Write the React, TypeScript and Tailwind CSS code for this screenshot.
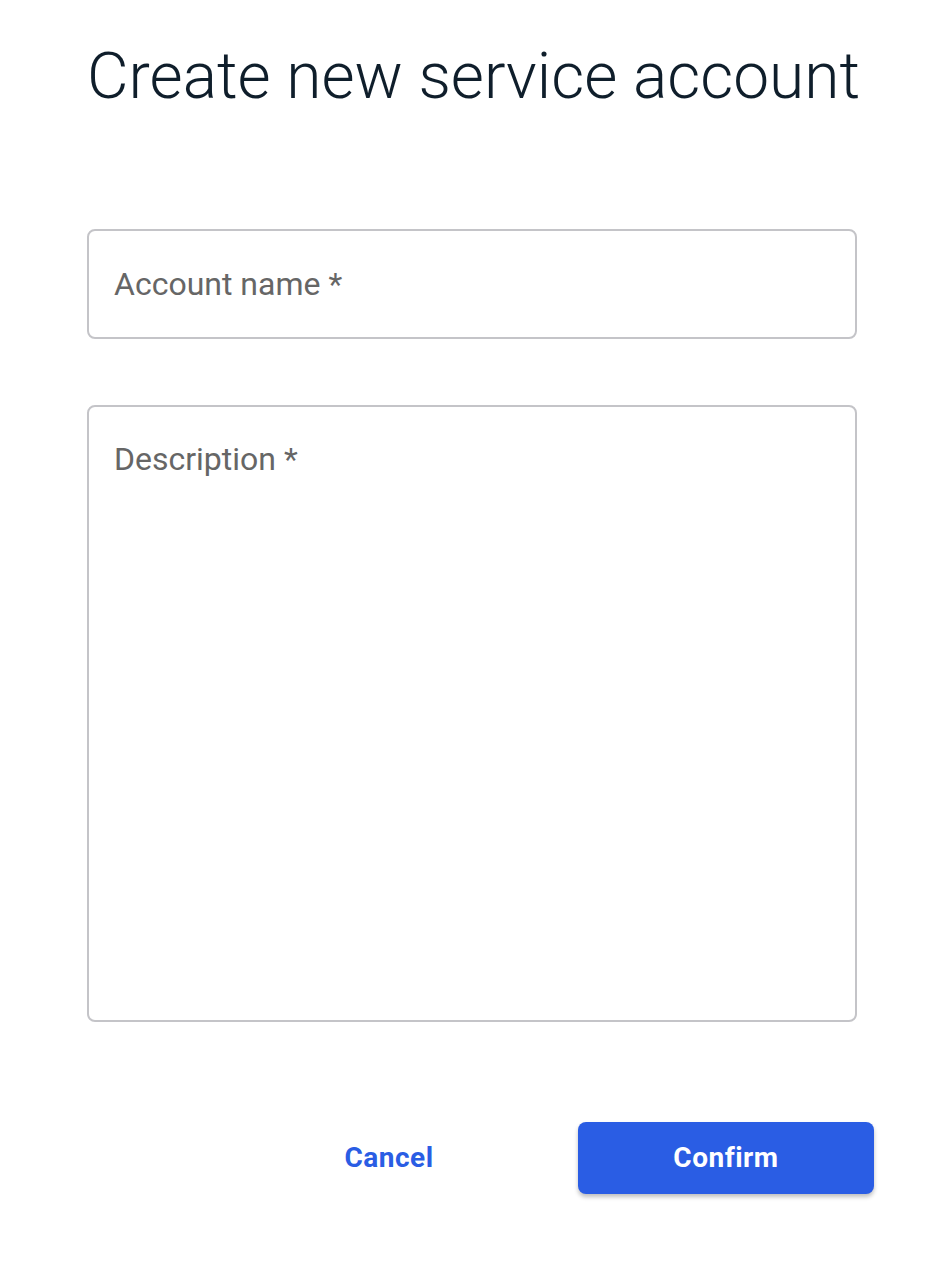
export default function App() {
  return (
    <div className="w-[942px] h-[1262px] bg-white" style={{ fontFamily: "Roboto, 'Liberation Sans', sans-serif" }}>
      <div className="pl-[87px] pr-[85px] pt-[37px]">
        <h1 className="text-[64px] leading-[80px] font-light text-[#0f1e2b] whitespace-nowrap">Create new service account</h1>
        <div className="mt-[112px] h-[110px] rounded-[8px] border-2 border-[#c4c4c8] flex items-center px-[25px] pb-[1px]">
          <span className="text-[32px] text-[#666666]">Account name *</span>
        </div>
        <div className="mt-[66px] h-[617px] rounded-[8px] border-2 border-[#c4c4c8] px-[25px] pt-[28px]">
          <span className="text-[32px] text-[#666666]">Description *</span>
        </div>
      </div>
      <div className="mt-[100px] flex justify-end pr-[68px] gap-[109px]">
        <button className="w-[160px] h-[72px] flex items-center justify-center text-[28px] font-bold text-[#2a5de4] tracking-[0.5px]">Cancel</button>
        <button className="w-[296px] h-[72px] rounded-[8px] bg-[#2a5de4] flex items-center justify-center text-[28px] font-bold text-white tracking-[0.5px] shadow-[0_3px_4px_rgba(0,0,0,0.25)]">Confirm</button>
      </div>
    </div>
  );
}
